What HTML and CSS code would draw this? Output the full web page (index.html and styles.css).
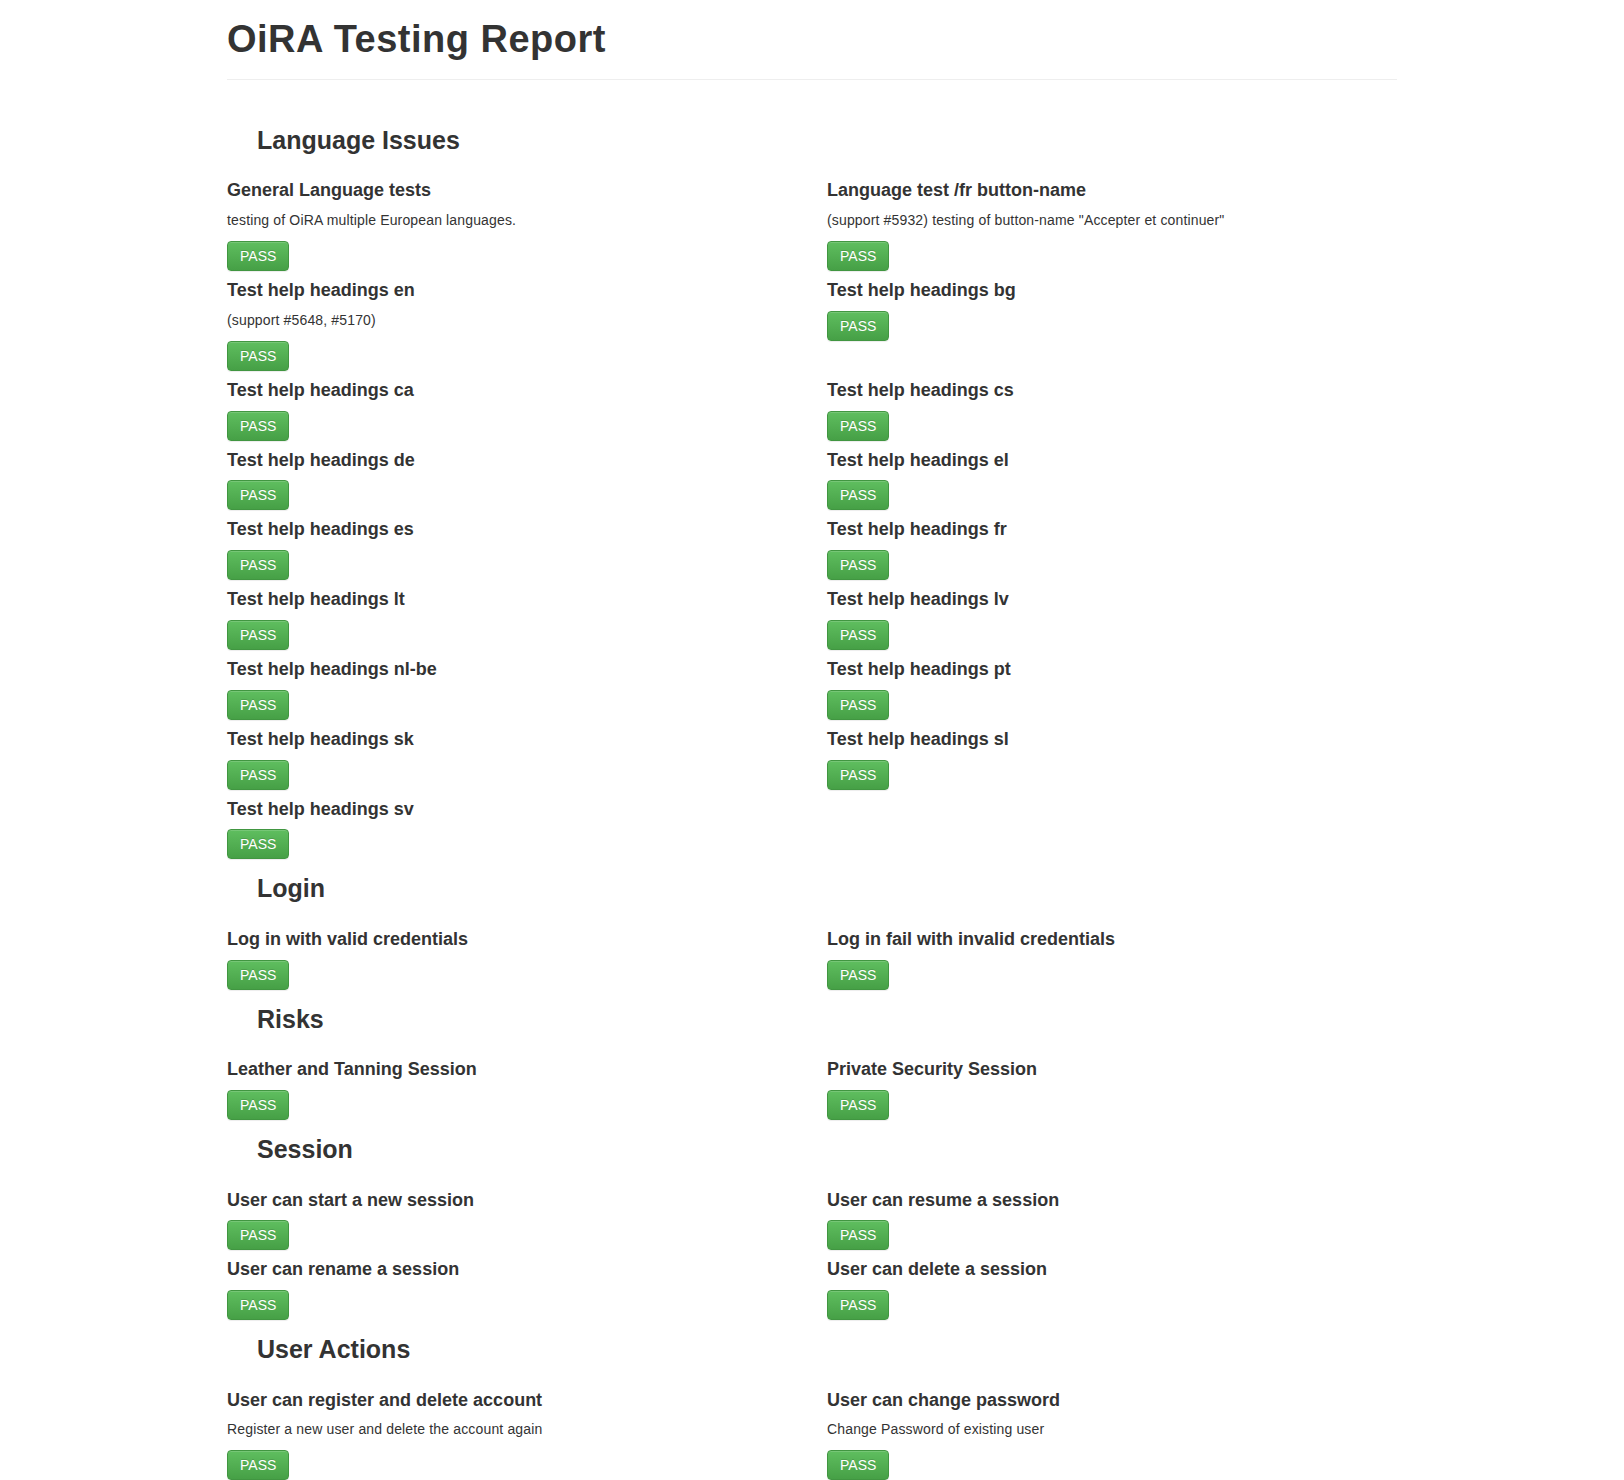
FILE: index.html
```html
<!DOCTYPE html>
<html lang="en">
<head>
<meta charset="utf-8">
<title>OiRA Testing Report</title>
<link rel="stylesheet" href="styles.css">
</head>
<body>
<div class="container">
  <div class="page-header">
    <h1>OiRA Testing Report</h1>
  </div>

  <h3 class="section-title">Language Issues</h3>
  <div class="tests">
    <div class="test">
      <h4>General Language tests</h4>
      <p>testing of OiRA multiple European languages.</p>
      <span class="btn">PASS</span>
    </div>
    <div class="test">
      <h4>Language test /fr button-name</h4>
      <p>(support #5932) testing of button-name "Accepter et continuer"</p>
      <span class="btn">PASS</span>
    </div>
    <div class="test">
      <h4>Test help headings en</h4>
      <p>(support #5648, #5170)</p>
      <span class="btn">PASS</span>
    </div>
    <div class="test">
      <h4>Test help headings bg</h4>
      <span class="btn">PASS</span>
    </div>
    <div class="test">
      <h4>Test help headings ca</h4>
      <span class="btn">PASS</span>
    </div>
    <div class="test">
      <h4>Test help headings cs</h4>
      <span class="btn">PASS</span>
    </div>
    <div class="test">
      <h4>Test help headings de</h4>
      <span class="btn">PASS</span>
    </div>
    <div class="test">
      <h4>Test help headings el</h4>
      <span class="btn">PASS</span>
    </div>
    <div class="test">
      <h4>Test help headings es</h4>
      <span class="btn">PASS</span>
    </div>
    <div class="test">
      <h4>Test help headings fr</h4>
      <span class="btn">PASS</span>
    </div>
    <div class="test">
      <h4>Test help headings lt</h4>
      <span class="btn">PASS</span>
    </div>
    <div class="test">
      <h4>Test help headings lv</h4>
      <span class="btn">PASS</span>
    </div>
    <div class="test">
      <h4>Test help headings nl-be</h4>
      <span class="btn">PASS</span>
    </div>
    <div class="test">
      <h4>Test help headings pt</h4>
      <span class="btn">PASS</span>
    </div>
    <div class="test">
      <h4>Test help headings sk</h4>
      <span class="btn">PASS</span>
    </div>
    <div class="test">
      <h4>Test help headings sl</h4>
      <span class="btn">PASS</span>
    </div>
    <div class="test">
      <h4>Test help headings sv</h4>
      <span class="btn">PASS</span>
    </div>
  </div>

  <h3 class="section-title">Login</h3>
  <div class="tests">
    <div class="test">
      <h4>Log in with valid credentials</h4>
      <span class="btn">PASS</span>
    </div>
    <div class="test">
      <h4>Log in fail with invalid credentials</h4>
      <span class="btn">PASS</span>
    </div>
  </div>

  <h3 class="section-title">Risks</h3>
  <div class="tests">
    <div class="test">
      <h4>Leather and Tanning Session</h4>
      <span class="btn">PASS</span>
    </div>
    <div class="test">
      <h4>Private Security Session</h4>
      <span class="btn">PASS</span>
    </div>
  </div>

  <h3 class="section-title">Session</h3>
  <div class="tests">
    <div class="test">
      <h4>User can start a new session</h4>
      <span class="btn">PASS</span>
    </div>
    <div class="test">
      <h4>User can resume a session</h4>
      <span class="btn">PASS</span>
    </div>
    <div class="test">
      <h4>User can rename a session</h4>
      <span class="btn">PASS</span>
    </div>
    <div class="test">
      <h4>User can delete a session</h4>
      <span class="btn">PASS</span>
    </div>
  </div>

  <h3 class="section-title">User Actions</h3>
  <div class="tests">
    <div class="test">
      <h4>User can register and delete account</h4>
      <p>Register a new user and delete the account again</p>
      <span class="btn">PASS</span>
    </div>
    <div class="test">
      <h4>User can change password</h4>
      <p>Change Password of existing user</p>
      <span class="btn">PASS</span>
    </div>
  </div>
</div>
</body>
</html>
```

FILE: styles.css
```css
* {
  box-sizing: border-box;
}

body {
  margin: 0;
  font-family: "Liberation Sans", Arial, Helvetica, sans-serif;
  font-size: 14px;
  line-height: 1.42857;
  color: #333;
  background: #fff;
}

.container {
  width: 1170px;
  margin: 0 auto;
}

.page-header {
  padding-bottom: 9px;
  margin: 0 0 47px;
  border-bottom: 1px solid #eee;
}

.page-header h1 {
  margin: 19px 0 9px;
  font-size: 38px;
  font-weight: bold;
  line-height: 1.1;
  letter-spacing: 0.5px;
}

.section-title {
  margin: 16px 0 17px;
  padding-left: 30px;
  font-size: 25px;
  font-weight: bold;
  line-height: 1.1;
}

.tests {
  display: grid;
  grid-template-columns: 570px 570px;
  column-gap: 30px;
  align-items: start;
}

.test h4 {
  margin: 10px 0;
  font-size: 18px;
  font-weight: bold;
  line-height: 1.1;
}

.test p {
  margin: 0 0 12px;
  font-size: 14px;
  line-height: 18px;
  letter-spacing: 0.15px;
}

.btn {
  display: inline-block;
  vertical-align: top;
  height: 30px;
  padding: 4px 12px;
  font-size: 14px;
  line-height: 20px;
  color: #fff;
  text-shadow: 0 -1px 0 rgba(0, 0, 0, 0.15);
  background-image: linear-gradient(to bottom, #5fbe5f 0, #46a046 100%);
  border: 1px solid #419641;
  border-radius: 4px;
  box-shadow: inset 0 1px 0 rgba(255, 255, 255, 0.15), 0 1px 1px rgba(0, 0, 0, 0.075);
}
```
